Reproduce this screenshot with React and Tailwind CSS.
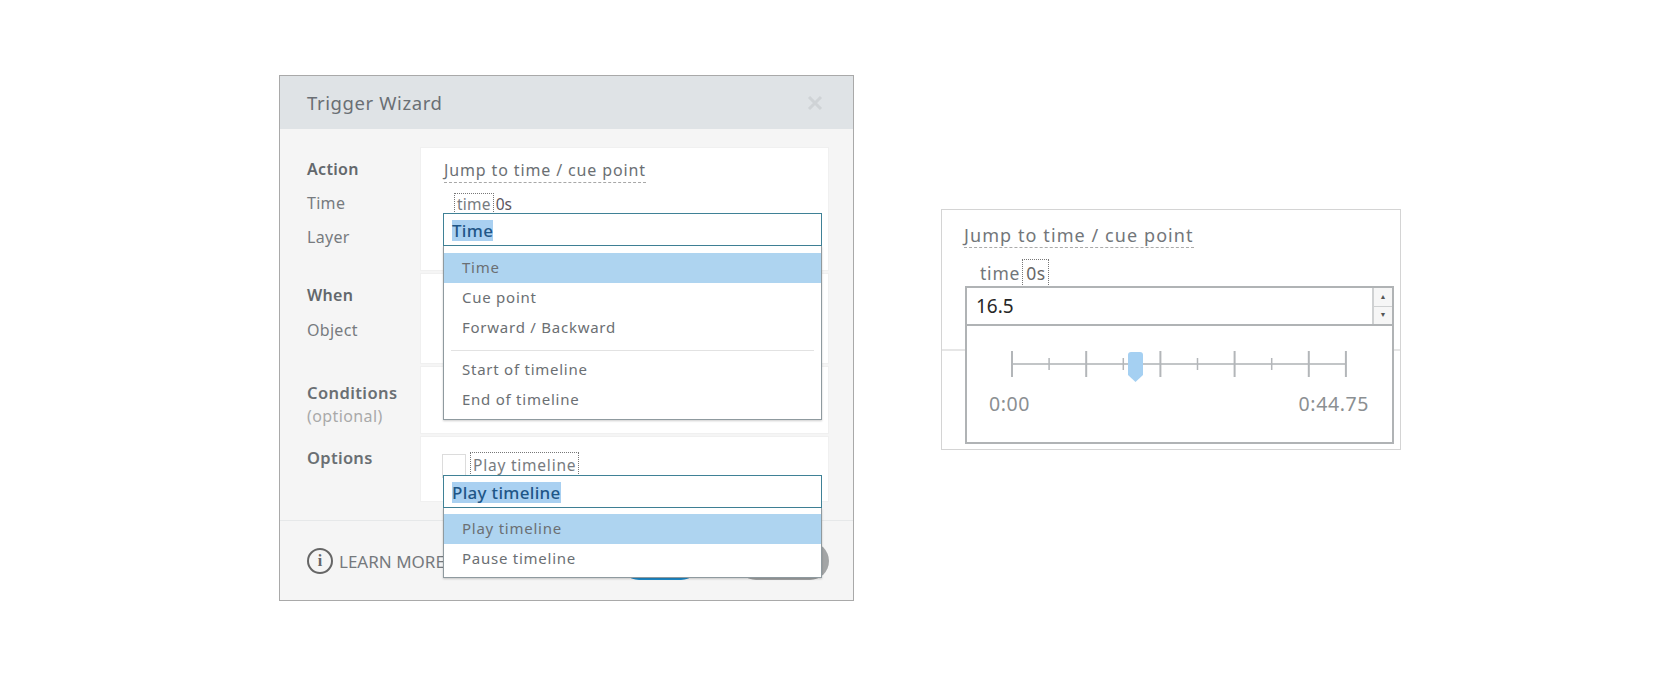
const font = { fontFamily: '"Noto Sans", "Open Sans", sans-serif' };

function Row({ labels, height, children }) {
  return (
    <div className="flex" style={{ height }}>
      <div className="w-[140px] pl-[27px] shrink-0">{labels}</div>
      <div className="w-[409px] bg-white border border-[#f0f0f0] relative">{children}</div>
    </div>
  );
}

function Item({ active, children, className = '' }) {
  return (
    <div className={`h-[30px] pl-[18px] pb-[2px] flex items-center text-[15px] tracking-[0.75px] text-[#6b6f73] ${active ? 'bg-[#aed4f0]' : ''} ${className}`}>
      {children}
    </div>
  );
}

function Combo({ value, top, pad, children }) {
  return (
    <div className="absolute left-[163px] w-[379px]" style={{ top }}>
      <div className="h-[33px] bg-white border border-[#3f8196] pl-[8px] pt-[1px] flex items-center text-[17px] tracking-[0.3px] font-medium text-[#35546c]">
        <span className="bg-[#a9d0f1] text-[#1f5687] leading-[21px]">{value}</span>
      </div>
      <div className="bg-white border border-t-0 border-[#8f9a9f] shadow-[0_1px_2px_rgba(0,0,0,0.2)]" style={{ paddingTop: pad }}>{children}</div>
    </div>
  );
}

function Trigger() {
  return (
    <div className="relative w-[575px] h-[526px] border border-[#a9a9a9] bg-[#f5f5f5] flex flex-col shrink-0">
      <div className="h-[53px] bg-[#dfe3e6] pl-[27px] pr-[30px] flex items-center justify-between">
        <span className="text-[18.5px] tracking-[0.6px] text-[#6a6f74]">Trigger Wizard</span>
        <svg width="16" height="16" viewBox="0 0 16 16"><path d="M2 2L14 14M14 2L2 14" stroke="#cfd3d6" strokeWidth="3" /></svg>
      </div>

      <div className="pt-[18px] flex flex-col gap-[2px] h-[392px] border-b border-[#e6e8e9]">
        <Row height={124} labels={
          <div className="text-[16px] text-[#777b7f] tracking-[0.3px]">
            <div className="h-[44px] flex items-center font-semibold text-[#63686c]">Action</div>
            <div className="h-[34px] flex items-center -mt-[5px]">Time</div>
            <div className="h-[34px] flex items-center">Layer</div>
          </div>
        }>
          <div className="pl-[23px] pt-[10px]">
            <span className="inline-block text-[16px] leading-[22px] tracking-[0.87px] text-[#6b6f73] border-b border-dashed border-[#a8a8a8] pb-px">Jump to time / cue point</span>
            <div className="flex items-start pl-[10px] mt-[10px] text-[15.5px] leading-[20px]">
              <span className="px-[2px] h-[23px] border border-dotted border-[#777] text-[#777b7f] tracking-[0.2px]">time</span>
              <span className="ml-[2px] text-[#5c5560] mt-[1px]">0s</span>
            </div>
          </div>
        </Row>
        <Row height={91} labels={
          <div className="text-[16px] text-[#777b7f] tracking-[0.3px] pt-[10px]">
            <div className="h-[24px] flex items-center font-semibold text-[#63686c]">When</div>
            <div className="h-[34px] mt-[6px] flex items-center">Object</div>
          </div>
        } />
        <Row height={68} labels={
          <div className="pt-[15px] text-[16.5px] leading-[24px] tracking-[0.4px]">
            <div className="font-semibold text-[#6a6f73]">Conditions</div>
            <div className="text-[#a9a9a9] text-[16px] -mt-[1px]">(optional)</div>
          </div>
        } />
        <Row height={66} labels={
          <div className="pt-[10px] text-[16.5px] leading-[24px] tracking-[0.3px] font-semibold text-[#6a6f73]">Options</div>
        }>
          <div className="flex items-start pl-[21px] pt-[17px]">
            <div className="w-[24px] h-[24px] border border-[#dcdcdc] bg-white" />
            <span className="ml-[4px] -mt-[2px] h-[26px] px-[2px] border border-dotted border-[#777] text-[15.5px] leading-[24px] tracking-[0.78px] text-[#777b7f]">Play timeline</span>
          </div>
        </Row>
      </div>

      <div className="flex-1 pl-[27px] pr-[24px] flex items-center justify-between">
        <div className="flex items-center gap-[6px]">
          <div className="w-[26px] h-[26px] rounded-full border-2 border-[#666] flex items-center justify-center text-[16px] font-bold text-[#666]" style={{ fontFamily: '"Liberation Serif", serif' }}>i</div>
          <span className="text-[17px] text-[#75797d] pt-[3px]">LEARN MORE</span>
        </div>
        <div className="flex gap-[37px] pt-[1px]">
          <div className="w-[80px] h-[38px] rounded-full bg-[#1f8ccb]" />
          <div className="w-[92px] h-[38px] rounded-full bg-[#a3a5a6]" />
        </div>
      </div>

      <Combo value="Time" top={137} pad={7}>
        <Item active>Time</Item>
        <Item>Cue point</Item>
        <Item>Forward / Backward</Item>
        <div className="h-px bg-[#e2e2e2] mx-[7px] mt-[7px] mb-[4px]" />
        <Item>Start of timeline</Item>
        <Item className="mb-[4px]">End of timeline</Item>
      </Combo>
      <Combo value="Play timeline" top={399} pad={6}>
        <Item active>Play timeline</Item>
        <Item className="mb-[3px]">Pause timeline</Item>
      </Combo>
    </div>
  );
}

function Slider() {
  const ticks = [0, 1, 2, 3, 4, 5, 6, 7, 8, 9];
  return (
    <svg width="429" height="66" viewBox="0 0 429 66" className="block">
      <line x1="45" x2="379" y1="38" y2="38" stroke="#c2c5c7" strokeWidth="2" />
      {ticks.map((i) => {
        const x = 45 + i * 37.1;
        const major = i % 2 === 0 || i === 9;
        return <line key={i} x1={x} x2={x} y1={major ? 25 : 32} y2={major ? 51 : 44} stroke="#b3b6b9" strokeWidth={major ? 2 : 1.5} />;
      })}
      <path d="M161 29q0-3 3-3h9q3 0 3 3v20l-7.5 7l-7.5-7z" fill="#a5d0f2" />
    </svg>
  );
}

function TimeCard() {
  return (
    <div className="relative w-[460px] h-[241px] mt-[134px] border border-[#d4d4d4] bg-white shrink-0">
      <div className="pl-[22px] pt-[13px]">
        <span className="inline-block text-[18px] leading-[24px] tracking-[1.08px] text-[#72767a] border-b border-dashed border-[#aaa]">Jump to time / cue point</span>
      </div>
      <div className="flex items-start pl-[38px] mt-[11px] text-[17.5px] leading-[24px]">
        <span className="text-[#72767a] pt-[2px] tracking-[0.8px]">time</span>
        <span className="ml-[2px] px-[3px] h-[28px] leading-[26px] tracking-[0.4px] border border-dotted border-[#777] text-[#686868]">0s</span>
      </div>
      <div className="h-[2px] bg-[#e6e6e6] absolute left-0 right-0 top-[139px]" />
      <div className="relative ml-[23px] w-[429px] h-[158px] border-2 border-[#b0b3b5] bg-white -mt-px">
        <div className="h-[38px] border-b-2 border-[#b0b3b5] flex items-center justify-between pl-[9px]">
          <span className="text-[19px] text-[#262626]">16.5</span>
          <div className="w-[20px] h-full border-l-2 border-[#cfd1d2] flex flex-col">
            <div className="flex-1 bg-[#f6f6f6] border-b border-[#cfd1d2] flex items-center justify-center text-[7px] text-[#555]">▲</div>
            <div className="flex-1 bg-[#f6f6f6] flex items-center justify-center text-[7px] text-[#555]">▼</div>
          </div>
        </div>
        <Slider />
        <div className="flex justify-between pl-[22px] pr-[23px] text-[19.5px] leading-[24px] tracking-[0.6px] text-[#8b8f92]">
          <span>0:00</span>
          <span>0:44.75</span>
        </div>
      </div>
    </div>
  );
}

export default function App() {
  return (
    <div className="w-[1680px] h-[676px] bg-white flex items-start pl-[279px] pt-[75px] gap-[87px] overflow-hidden" style={font}>
      <Trigger />
      <TimeCard />
    </div>
  );
}
